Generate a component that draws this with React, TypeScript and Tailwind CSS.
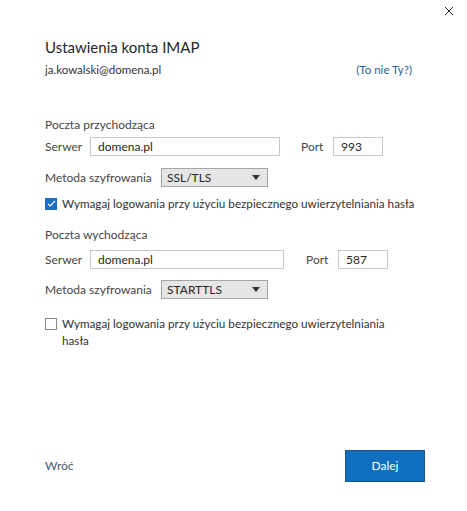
function Field({ value, width }: { value: string; width: string }) {
  return (
    <div className={`${width} h-[19px] border border-[#c8c8c8] bg-white flex items-center px-[7px] text-[12px] text-[#262626]`}>
      {value}
    </div>
  )
}

function Select({ value }: { value: string }) {
  return (
    <div className="w-[107px] h-[19px] border border-[#a6a6a6] bg-[#e6e6e6] flex items-center justify-between pl-[5px] pr-[7px] text-[12px] text-[#262626]">
      <span>{value}</span>
      <svg width="8" height="5" viewBox="0 0 8 5"><path d="M0 0h8L4 5z" fill="#333" /></svg>
    </div>
  )
}

function Checkbox({ checked }: { checked: boolean }) {
  return checked ? (
    <div className="w-[12px] h-[12px] shrink-0 bg-[#1b6ec2] flex items-center justify-center">
      <svg width="9" height="9" viewBox="0 0 9 9"><path d="M1 4.8l2.2 2.2L8 2" stroke="white" strokeWidth="1.1" fill="none" /></svg>
    </div>
  ) : (
    <div className="w-[12px] h-[12px] shrink-0 border border-[#8a8a8a] bg-white" />
  )
}

type SectionProps = {
  title: string
  port: string
  method: string
  checked: boolean
  wide: boolean
}

function Section({ title, port, method, checked, wide }: SectionProps) {
  return (
    <div className="flex flex-col whitespace-nowrap">
      <div className="text-[12px] text-[#444] leading-[16px]">{title}</div>
      <div className={`flex items-center ${wide ? 'mt-[7px]' : 'mt-[4px]'}`}>
        <span className="w-[45px] text-[12px] text-[#444]">Serwer</span>
        <Field value="domena.pl" width={wide ? 'w-[194px]' : 'w-[190px]'} />
        <span className={`${wide ? 'ml-[22px]' : 'ml-[21px]'} w-[32px] text-[12px] text-[#444]`}>Port</span>
        <Field value={port} width="w-[50px]" />
      </div>
      <div className={`flex items-center ${wide ? 'mt-[11px]' : 'mt-[12px]'}`}>
        <span className="w-[116px] text-[12px] text-[#444]">Metoda szyfrowania</span>
        <Select value={method} />
      </div>
      <div className={`flex items-start gap-[5px] ${wide ? 'mt-[16px]' : 'mt-[8px]'}`}>
        <div className="pt-[2.5px]"><Checkbox checked={checked} /></div>
        <span className={`text-[11.7px] text-[#333] leading-[17px] ${checked ? '' : 'w-[345px] whitespace-normal'}`}>
          Wymagaj logowania przy użyciu bezpiecznego uwierzytelniania hasła
        </span>
      </div>
    </div>
  )
}

export default function App() {
  return (
    <div className="w-[467px] h-[511px] bg-white flex flex-col" style={{ fontFamily: 'Lato, "Noto Sans", sans-serif' }}>
      <div className="flex justify-end pt-[6px] pr-[13px]">
        <svg width="10" height="10" viewBox="0 0 10 10"><path d="M1 1l8 8M9 1L1 9" stroke="#333" strokeWidth="1" /></svg>
      </div>
      <div className="pl-[45px] pr-[55px] flex flex-col">
        <h1 className="mt-[20px] text-[15px] text-[#262626] leading-[22px]">Ustawienia konta IMAP</h1>
        <div className="flex justify-between mt-[3px] text-[11.5px] leading-[18px]">
          <span className="text-[#333]">ja.kowalski@domena.pl</span>
          <span className="text-[#2b5f8f]">(To nie Ty?)</span>
        </div>
        <div className="mt-[38px]">
          <Section title="Poczta przychodząca" port="993" method="SSL/TLS" checked wide={false} />
        </div>
        <div className="mt-[15px]">
          <Section title="Poczta wychodząca" port="587" method="STARTTLS" checked={false} wide />
        </div>
      </div>
      <div className="mt-auto mb-[29px] pl-[45px] pr-[42px] flex items-center justify-between">
        <span className="text-[12px] text-[#4a5a6a]">Wróć</span>
        <button className="w-[80px] h-[32px] bg-[#106ebe] border border-[#1a5590] text-white text-[12px]">Dalej</button>
      </div>
    </div>
  )
}
